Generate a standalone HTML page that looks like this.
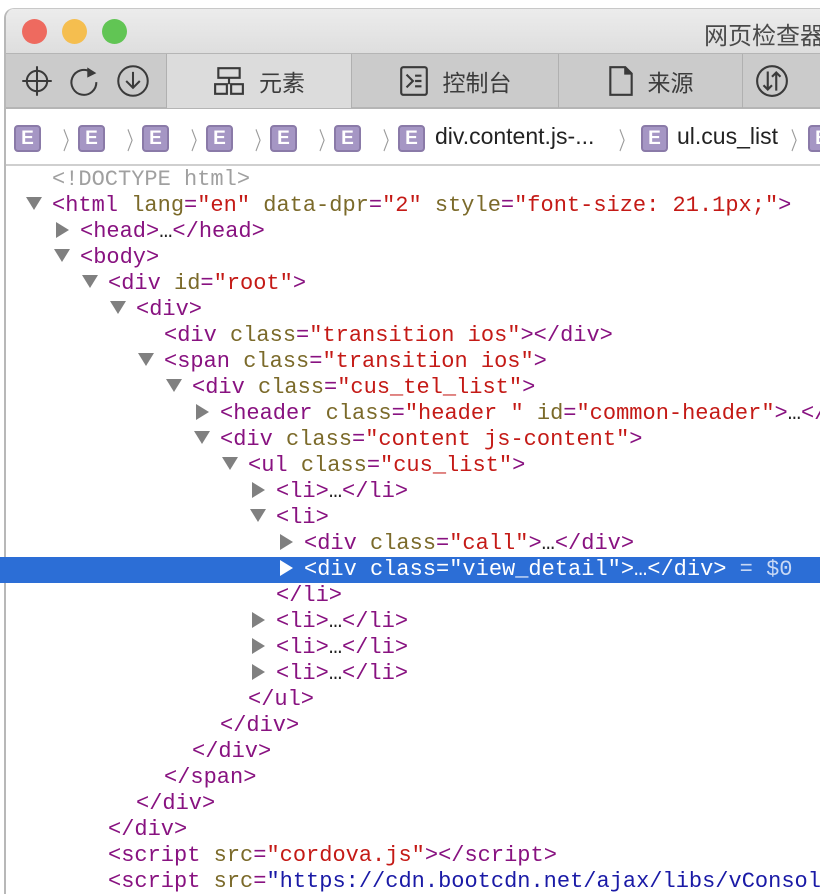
<!DOCTYPE html>
<html><head><meta charset="utf-8"><style>
*{margin:0;padding:0;box-sizing:border-box}
html,body{width:820px;height:894px;overflow:hidden}
body{background:#fff;position:relative;font-family:"Liberation Sans","Noto Sans CJK SC",sans-serif}
.win{position:absolute;left:4px;top:8px;width:816px;bottom:0;border-left:2px solid #b8b8b8;border-top:1px solid #c8c8c8;border-top-left-radius:10px;overflow:hidden;background:#fff}
.title{position:absolute;left:0;right:0;top:0;height:44px;background:linear-gradient(#ececec,#dedede)}
.dot{position:absolute;top:10px;width:25px;height:25px;border-radius:50%}
.ttl{position:absolute;left:698px;top:7px;font-size:24px;color:#4a4a4a;white-space:nowrap}
.tb{position:absolute;left:0;right:0;top:44px;height:56px;background:#cbcbcb;border-top:1px solid #b5b5b5;border-bottom:2px solid #b5b5b5}
.tab{position:absolute;top:0;height:54px;border-left:1px solid #b0b0b0;font-size:23px;color:#3c3c3c;display:flex;align-items:center;justify-content:center;gap:14px}
.bc{position:absolute;left:0;right:0;top:100px;height:57px;background:#fff;border-bottom:2px solid #cfcfcf}
.E{position:absolute;top:16px;width:27px;height:27px;background:#a596c4;border:2px solid #8a7aa8;border-radius:4px;color:#fff;font:bold 19px "Liberation Sans",sans-serif;text-align:center;line-height:23px}
.ch{position:absolute;top:12px;color:#9a9a9a;font-size:24px;transform:scaleX(.6)}
.bt{position:absolute;top:14px;font-size:23px;color:#222;white-space:nowrap}
.code{position:absolute;left:0;top:167px;width:820px;height:727px;overflow:hidden;font-family:"Liberation Mono",monospace;font-size:22px}
.r{position:absolute;left:0;width:820px;height:26px;line-height:26px;white-space:pre;overflow:hidden;color:#881280}
.a{color:#7b6a2a}.v{color:#c41a16}.u{color:#1a1aa6}.g{color:#a0a0a0}
.tri{display:inline-block;width:0;height:0;vertical-align:middle;margin-top:-3px}
.dn{border-left:8px solid transparent;border-right:8px solid transparent;border-top:13px solid #808080}
.rt{border-top:8px solid transparent;border-bottom:8px solid transparent;border-left:13px solid #808080}
.sel{background:#2c6ed6;color:#fff}
.sel span{color:#fff}
</style></head><body>
<div class="win">
 <div class="title">
  <div class="dot" style="left:16px;background:#ee6a5f;"></div>
  <div class="dot" style="left:56px;background:#f5be4f;"></div>
  <div class="dot" style="left:96px;background:#61c554;"></div>
  <div class="ttl">网页检查器</div>
 </div>
 <div class="tb">
  <svg style="position:absolute;left:14px;top:10px" width="34" height="34" viewBox="0 0 30 30" fill="none" stroke="#3a3a3a" stroke-width="1.8"><circle cx="15" cy="15" r="9"/><path d="M15 2v26M2 15h26"/></svg>
  <svg style="position:absolute;left:62px;top:10px" width="34" height="34" viewBox="0 0 30 30" fill="none" stroke="#3a3a3a" stroke-width="1.8"><path d="M20 7A11 11 0 1 0 25 16"/><path d="M17 3l8 5-8 4z" fill="#3a3a3a" stroke="none"/></svg>
  <svg style="position:absolute;left:110px;top:10px" width="34" height="34" viewBox="0 0 30 30" fill="none" stroke="#3a3a3a" stroke-width="1.8"><circle cx="15" cy="15" r="13"/><path d="M15 7v14M9 15l6 6 6-6"/></svg>
  <div class="tab" style="left:160px;width:185px;background:#dcdcdc"><svg width="32" height="30" viewBox="0 0 30 28" fill="none" stroke="#3a3a3a" stroke-width="2"><rect x="5" y="2" width="20" height="9"/><rect x="2" y="17" width="11" height="9"/><rect x="17" y="17" width="11" height="9"/><path d="M15 11v6"/></svg><span>元素</span></div>
  <div class="tab" style="left:345px;width:207px"><svg width="30" height="32" viewBox="0 0 28 30" fill="none" stroke="#3a3a3a" stroke-width="2"><rect x="2" y="2" width="24" height="26" rx="2"/><path d="M7 9l6 6-6 6M15 10h6M15 15h6M15 20h6"/></svg><span>控制台</span></div>
  <div class="tab" style="left:552px;width:184px"><svg width="26" height="32" viewBox="0 0 24 30" fill="none" stroke="#3a3a3a" stroke-width="2"><path d="M2 2h14l6 6v20H2z"/><path d="M16 2v6h6" fill="#3a3a3a"/></svg><span>来源</span></div>
  <div class="tab" style="left:736px;width:100px;justify-content:flex-start;padding-left:12px"><svg width="34" height="34" viewBox="0 0 32 32" fill="none" stroke="#3a3a3a" stroke-width="2"><circle cx="16" cy="16" r="14"/><path d="M12 7v17M8 20l4 4 4-4M20 25V8M16 12l4-4 4 4"/></svg></div>
 </div>
 <div class="bc">
  <div class="E" style="left:8px">E</div><div class="ch" style="left:52px">〉</div>
  <div class="E" style="left:72px">E</div><div class="ch" style="left:116px">〉</div>
  <div class="E" style="left:136px">E</div><div class="ch" style="left:180px">〉</div>
  <div class="E" style="left:200px">E</div><div class="ch" style="left:244px">〉</div>
  <div class="E" style="left:264px">E</div><div class="ch" style="left:308px">〉</div>
  <div class="E" style="left:328px">E</div><div class="ch" style="left:372px">〉</div>
  <div class="E" style="left:392px">E</div><div class="bt" style="left:429px">div.content.js-...</div><div class="ch" style="left:608px">〉</div>
  <div class="E" style="left:635px">E</div><div class="bt" style="left:671px">ul.cus_list</div><div class="ch" style="left:780px">〉</div>
  <div class="E" style="left:802px">E</div>
 </div>
</div>
<div class="code">
<div class="r" style="top:0"><span style="padding-left:52px" class="g">&lt;!DOCTYPE html&gt;</span></div>
<div class="r" style="top:26px"><span style="padding-left:26px"><i class="tri dn"></i></span><span style="margin-left:10px">&lt;html <span class="a">lang</span>=<span class="v">"en"</span> <span class="a">data-dpr</span>=<span class="v">"2"</span> <span class="a">style</span>=<span class="v">"font-size: 21.1px;"</span>&gt;</span></div>
<div class="r" style="top:52px"><span style="padding-left:56px"><i class="tri rt"></i></span><span style="margin-left:11px">&lt;head&gt;<span style="color:#222">…</span>&lt;/head&gt;</span></div>
<div class="r" style="top:78px"><span style="padding-left:54px"><i class="tri dn"></i></span><span style="margin-left:10px">&lt;body&gt;</span></div>
<div class="r" style="top:104px"><span style="padding-left:82px"><i class="tri dn"></i></span><span style="margin-left:10px">&lt;div <span class="a">id</span>=<span class="v">"root"</span>&gt;</span></div>
<div class="r" style="top:130px"><span style="padding-left:110px"><i class="tri dn"></i></span><span style="margin-left:10px">&lt;div&gt;</span></div>
<div class="r" style="top:156px"><span style="padding-left:164px">&lt;div <span class="a">class</span>=<span class="v">"transition ios"</span>&gt;&lt;/div&gt;</span></div>
<div class="r" style="top:182px"><span style="padding-left:138px"><i class="tri dn"></i></span><span style="margin-left:10px">&lt;span <span class="a">class</span>=<span class="v">"transition ios"</span>&gt;</span></div>
<div class="r" style="top:208px"><span style="padding-left:166px"><i class="tri dn"></i></span><span style="margin-left:10px">&lt;div <span class="a">class</span>=<span class="v">"cus_tel_list"</span>&gt;</span></div>
<div class="r" style="top:234px"><span style="padding-left:196px"><i class="tri rt"></i></span><span style="margin-left:11px">&lt;header <span class="a">class</span>=<span class="v">"header "</span> <span class="a">id</span>=<span class="v">"common-header"</span>&gt;<span style="color:#222">…</span>&lt;/</span></div>
<div class="r" style="top:260px"><span style="padding-left:194px"><i class="tri dn"></i></span><span style="margin-left:10px">&lt;div <span class="a">class</span>=<span class="v">"content js-content"</span>&gt;</span></div>
<div class="r" style="top:286px"><span style="padding-left:222px"><i class="tri dn"></i></span><span style="margin-left:10px">&lt;ul <span class="a">class</span>=<span class="v">"cus_list"</span>&gt;</span></div>
<div class="r" style="top:312px"><span style="padding-left:252px"><i class="tri rt"></i></span><span style="margin-left:11px">&lt;li&gt;<span style="color:#222">…</span>&lt;/li&gt;</span></div>
<div class="r" style="top:338px"><span style="padding-left:250px"><i class="tri dn"></i></span><span style="margin-left:10px">&lt;li&gt;</span></div>
<div class="r" style="top:364px"><span style="padding-left:280px"><i class="tri rt"></i></span><span style="margin-left:11px">&lt;div <span class="a">class</span>=<span class="v">"call"</span>&gt;<span style="color:#222">…</span>&lt;/div&gt;</span></div>
<div class="r sel" style="top:390px"><span style="padding-left:280px"><i class="tri rt" style="border-left-color:#fff"></i></span><span style="margin-left:11px">&lt;div class="view_detail"&gt;…&lt;/div&gt; <span style="color:#c8d8f4">= $0</span></span></div>
<div class="r" style="top:416px"><span style="padding-left:276px">&lt;/li&gt;</span></div>
<div class="r" style="top:442px"><span style="padding-left:252px"><i class="tri rt"></i></span><span style="margin-left:11px">&lt;li&gt;<span style="color:#222">…</span>&lt;/li&gt;</span></div>
<div class="r" style="top:468px"><span style="padding-left:252px"><i class="tri rt"></i></span><span style="margin-left:11px">&lt;li&gt;<span style="color:#222">…</span>&lt;/li&gt;</span></div>
<div class="r" style="top:494px"><span style="padding-left:252px"><i class="tri rt"></i></span><span style="margin-left:11px">&lt;li&gt;<span style="color:#222">…</span>&lt;/li&gt;</span></div>
<div class="r" style="top:520px"><span style="padding-left:248px">&lt;/ul&gt;</span></div>
<div class="r" style="top:546px"><span style="padding-left:220px">&lt;/div&gt;</span></div>
<div class="r" style="top:572px"><span style="padding-left:192px">&lt;/div&gt;</span></div>
<div class="r" style="top:598px"><span style="padding-left:164px">&lt;/span&gt;</span></div>
<div class="r" style="top:624px"><span style="padding-left:136px">&lt;/div&gt;</span></div>
<div class="r" style="top:650px"><span style="padding-left:108px">&lt;/div&gt;</span></div>
<div class="r" style="top:676px"><span style="padding-left:108px">&lt;script <span class="a">src</span>=<span class="v">"cordova.js"</span>&gt;&lt;/script&gt;</span></div>
<div class="r" style="top:702px"><span style="padding-left:108px">&lt;script <span class="a">src</span>=<span class="u">"https://cdn.bootcdn.net/ajax/libs/vConsol</span></span></div>
</div>
</body></html>
